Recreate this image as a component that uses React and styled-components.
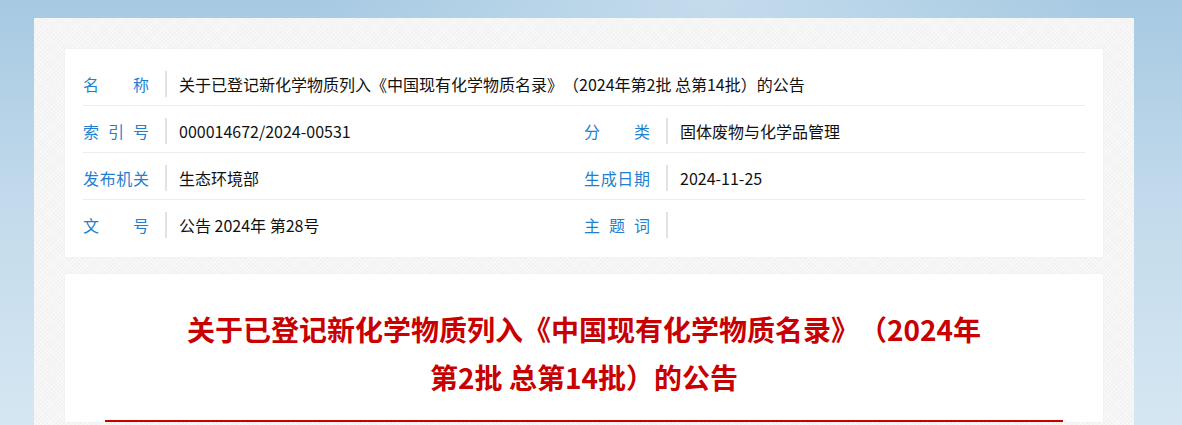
import styled, { createGlobalStyle } from 'styled-components';

const GlobalStyle = createGlobalStyle`
  html, body {
    margin: 0;
    padding: 0;
  }
  body {
    font-family: "Noto Sans CJK SC", "Noto Sans", sans-serif;
    text-spacing-trim: space-all;
    background: radial-gradient(ellipse at 60% 0%, #c4dcec 0%, rgba(196,220,236,0) 40%),
      linear-gradient(180deg, #a6c9e2 0%, #c2daeb 45%, #d6e7f2 100%);
    min-height: 425px;
    overflow: hidden;
  }
`;

/* 회색 패널 */
const PageBlock = styled.main`
  width: 1100px;
  margin: 18px 0 0 34px;
  padding: 31px 31px 0 31px;
  box-sizing: border-box;
  min-height: 420px;
  background-color: #f2f2f2;
  background-image:
    repeating-linear-gradient(45deg, rgba(255,255,255,0.4) 0 1px, transparent 1px 3px),
    repeating-linear-gradient(-45deg, rgba(255,255,255,0.4) 0 1px, transparent 1px 3px);
`;

const Card = styled.section`
  background: #fff;
  box-shadow: 0 0 2px rgba(0,0,0,0.04);
  padding: ${props => props.pad || '10px 18px'};
  margin-bottom: 17px;
`;

const InfoGrid = styled.div`
  display: grid;
  grid-template-columns: 1fr 1fr;
`;

const Row = styled.div`
  grid-column: ${props => props.full ? '1 / 3' : 'auto'};
  display: flex;
  align-items: center;
  padding: 12px 0 8px 0;
  border-bottom: ${props => props.last ? '1px solid transparent' : '1px solid #ececec'};
`;

const Label = styled.span`
  width: 66px;
  flex: none;
  display: flex;
  justify-content: space-between;
  color: #1f7fd0;
  font-size: 16px;
  line-height: 26px;
  margin-right: 16px;
`;

const Divider = styled.i`
  width: 2px;
  height: 26px;
  background: #e2e2e2;
  flex: none;
  margin-right: 12px;
`;

const Value = styled.span`
  color: #111;
  font-size: 16px;
  line-height: 26px;
  white-space: nowrap;
`;

const Title = styled.h1`
  max-width: 820px;
  margin: 0 auto 19px;
  text-align: center;
  color: #c80000;
  font-size: 28px;
  line-height: 48px;
  font-weight: bold;
`;

const RedLine = styled.div`
  height: 2px;
  background: #c80000;
`;

const Field = ({ label, children, full, last }) => (
  <Row full={full} last={last}>
    <Label>{label.split('').map((c, i) => <span key={i}>{c}</span>)}</Label>
    <Divider />
    <Value>{children}</Value>
  </Row>
);

const App = () => (
  <>
    <GlobalStyle />
    <PageBlock>
      <Card>
        <InfoGrid>
          <Field label='名称' full>关于已登记新化学物质列入《中国现有化学物质名录》（2024年第2批 总第14批）的公告</Field>
          <Field label='索引号'>000014672/2024-00531</Field>
          <Field label='分类'>固体废物与化学品管理</Field>
          <Field label='发布机关'>生态环境部</Field>
          <Field label='生成日期'>2024-11-25</Field>
          <Field label='文号' last>公告 2024年 第28号</Field>
          <Field label='主题词' last></Field>
        </InfoGrid>
      </Card>
      <Card pad='31px 40px 0'>
        <Title>关于已登记新化学物质列入《中国现有化学物质名录》（2024年第2批 总第14批）的公告</Title>
        <RedLine />
      </Card>
    </PageBlock>
  </>
);

export default App;
